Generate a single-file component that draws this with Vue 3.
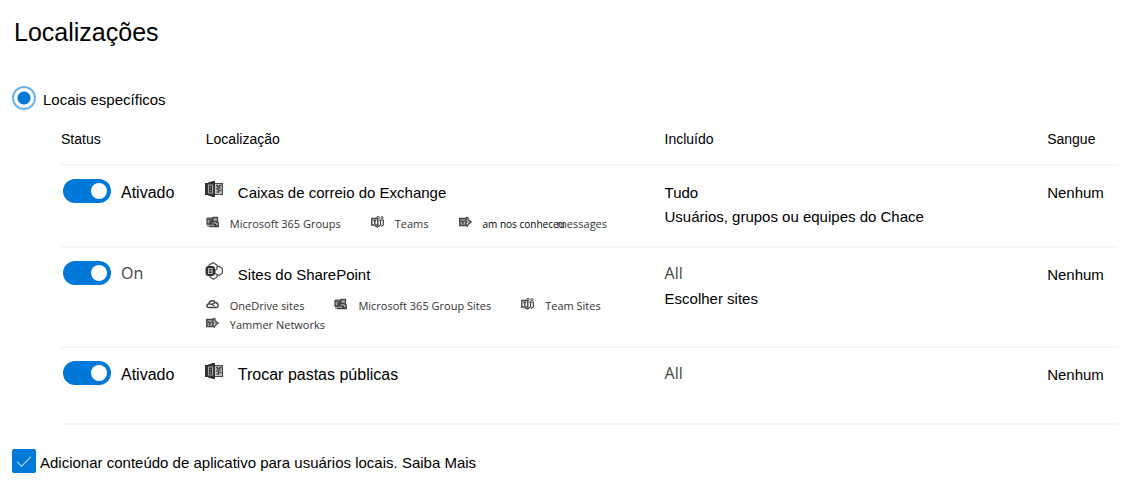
<script setup>
import { ref } from 'vue'

const specific = ref('specific')
const onPremises = ref(true)

const rows = ref([
  {
    id: 'exchange', on: true, status: 'Ativado', icon: 'exchange', name: 'Caixas de correio do Exchange',
    apps: [
      { icon: 'groups', label: 'Microsoft 365 Groups' },
      { icon: 'teams', label: 'Teams' },
      { icon: 'yammer', local: 'am nos conheceu', label: 'messages' }
    ],
    included: ['Tudo', 'Usuários, grupos ou equipes do Chace'], excluded: 'Nenhum'
  },
  {
    id: 'sharepoint', on: true, status: 'On', icon: 'sharepoint', name: 'Sites do SharePoint',
    apps: [
      { icon: 'cloud', label: 'OneDrive sites' },
      { icon: 'groups', label: 'Microsoft 365 Group Sites' },
      { icon: 'teams', label: 'Team Sites' },
      { icon: 'yammer', label: 'Yammer Networks' }
    ],
    included: ['All', 'Escolher sites'], excluded: 'Nenhum'
  },
  {
    id: 'folders', on: true, status: 'Ativado', icon: 'exchange', name: 'Trocar pastas públicas',
    apps: [], included: ['All'], excluded: 'Nenhum'
  }
])

const isSource = (text) => text === 'On' || text === 'All'
</script>

<template>
  <main class="page">
    <h1 class="title">Localizações</h1>

    <label class="choice">
      <input v-model="specific" class="radio" type="radio" name="scope" value="specific" />
      <span>Locais específicos</span>
    </label>

    <table class="locations">
      <colgroup>
        <col class="col-status" />
        <col class="col-location" />
        <col class="col-included" />
        <col />
      </colgroup>
      <thead>
        <tr>
          <th scope="col">Status</th>
          <th scope="col">Localização</th>
          <th scope="col">Incluído</th>
          <th scope="col">Sangue</th>
        </tr>
      </thead>
      <tbody>
        <tr v-for="row in rows" :key="row.id">
          <td>
            <label class="status">
              <input v-model="row.on" class="switch" type="checkbox" role="switch" />
              <span :class="{ source: isSource(row.status) }">{{ row.status }}</span>
            </label>
          </td>
          <td>
            <div class="name" :class="{ large: row.id === 'folders' }">
              <svg v-if="row.icon === 'exchange'" class="icon" viewBox="0 0 18 18" aria-hidden="true">
                <path d="M0 3h2l6-2h2v16H8l-6-2H0z" fill="#303030" />
                <path d="M3.500 5h4v8h-4zM5.500 7.300v1M5.500 10v1" stroke="#a8a8a8" stroke-width="1.200" fill="none" />
                <path d="M10 3.500h7.400v11H10" stroke="#4c4c4c" stroke-width="1.200" fill="#c8c8c8" />
                <path d="M11 5.500h1.500v1.500h2V5.500h2M11 9h2.500v1.500h3M11.500 12h2v1M15 7.500v1.500" stroke="#4c4c4c" stroke-width="1.300" fill="none" />
              </svg>
              <svg v-else class="icon" viewBox="0 0 18 18" aria-hidden="true">
                <g fill="none" stroke="#4a4a4a" stroke-width="1.200">
                  <path d="M4 5V3l4-2.300L12 3v4l-3 2M12 5l2-.8 3.300 2.300v4.800L14 13.500l-4-2V8M12 13v2l-3.500 2.300L5 15v-2" />
                </g>
                <rect x="0.500" y="4" width="9.500" height="10" rx="3" fill="#303030" />
                <path d="M3.500 6.500h3.500v5H3.500zM3.500 9H7" stroke="#bbb" stroke-width="1.100" fill="none" />
              </svg>
              <span>{{ row.name }}</span>
            </div>
            <ul v-if="row.apps.length" class="apps">
              <li v-for="app in row.apps" :key="app.label" class="app">
                <svg class="mini" viewBox="0 0 13 12" fill="none" stroke="#444" aria-hidden="true">
                  <g v-if="app.icon === 'groups'">
                    <path d="M1 1h11v10H1z" fill="#aaa" stroke="none" />
                    <path d="M1 3h5v5H1zM3 5h2v2H3M7 1.500h4.500v4H7zM3 10.500h9.300V7L9.500 5.500" stroke-width="1.300" />
                    <path d="M7.500 7.500l3 2.500" stroke="#222" stroke-width="1.500" />
                  </g>
                  <g v-else-if="app.icon === 'teams'">
                    <path d="M.8 2.500h6v6.500h-6zM2.300 4.500h3M3.800 4.500V8" stroke-width="1.400" />
                    <circle cx="7" cy="1.500" r="1.200" />
                    <circle cx="11" cy="1.700" r="1.100" />
                    <path d="M8 4h4.300v5L10 10.500M9.500 4v5L6.500 11 4 10" stroke-width="1.200" />
                  </g>
                  <g v-else-if="app.icon === 'yammer'">
                    <path d="M.8 2.500h6.200v7H.8z" fill="#aaa" stroke-width="1.500" />
                    <path d="M2 4.500l1.800 2 1.700-2M3.800 6.500v2M7 1.500l2 .3v2l3.300 2.200L9 8.500 8 11" stroke-width="1.300" />
                    <path d="M7 6h3.500" />
                  </g>
                  <g v-else>
                    <path d="M3 9.500C0 9.500.3 6 3 6c0-4 5.500-4 6-1.500C13 4.500 13 9.500 10 9.500z" stroke-width="1.400" />
                    <path d="M3 6c2-.7 3.500.5 5.500 2M5.500 6.800L9 4.500" stroke-width="1.200" />
                  </g>
                </svg>
                <span><span v-if="app.local" class="local">{{ app.local }}</span><span :class="{ lapped: app.local }">{{ app.label }}</span></span>
              </li>
            </ul>
          </td>
          <td>
            <div v-for="text in row.included" :key="text" class="line" :class="{ source: isSource(text) }">{{ text }}</div>
          </td>
          <td><div class="line">{{ row.excluded }}</div></td>
        </tr>
      </tbody>
    </table>

    <label class="choice consent">
      <input v-model="onPremises" class="check" type="checkbox" />
      <span>Adicionar conteúdo de aplicativo para usuários locais. Saiba Mais</span>
    </label>
  </main>
</template>

<style>
body {
  margin: 0;
  background: #fff;
}
</style>

<style scoped>
.page {
  padding: 16px 19px 16px 12px;
  color: #000;
  font: 15px/24px "Liberation Sans", Arial, sans-serif;
}

.title {
  margin: 0 0 36px 2px;
  font-size: 25px;
  line-height: 32px;
  font-weight: 400;
}

.choice {
  display: flex;
  align-items: center;
  gap: 7px;
}

.choice span {
  padding-top: 4px;
}

.radio,
.check,
.switch {
  appearance: none;
  flex: none;
  margin: 0;
  width: 24px;
  height: 24px;
}

.radio {
  border: 2px solid #6cb2ea;
  border-radius: 50%;
  background: radial-gradient(circle, #0078d7 6px, transparent 7px);
}

.check {
  border-radius: 2px;
}

.check:checked {
  background: #0078d7;
}

.check:checked::before {
  content: "";
  display: block;
  width: 13px;
  height: 6px;
  margin: 7px 5px;
  border-left: 1px solid #b5dcf8;
  border-bottom: 1px solid #b5dcf8;
  transform: rotate(-45deg);
}

.switch {
  width: 48px;
  border-radius: 12px;
  background: #777;
}

.switch::before {
  content: "";
  display: block;
  width: 16px;
  height: 16px;
  margin: 4px;
  border-radius: 50%;
  background: #fff;
}

.switch:checked {
  background: #0078d7;
}

.switch:checked::before {
  margin-left: 28px;
}

.locations {
  width: calc(100% - 49px);
  margin: 10px 0 0 49px;
  table-layout: fixed;
  border-collapse: separate;
  border-spacing: 0;
}

.col-status {
  width: 13.7%;
}

.col-location {
  width: 43.4%;
}

.col-included {
  width: 36.2%;
}

th {
  padding: 5px 0 13px;
  border-bottom: 2px solid #f6f6f6;
  font-size: 14px;
  font-weight: 400;
  text-align: left;
}

td {
  height: 48px;
  padding: 15px 0 12px;
  border-bottom: 2px solid #f6f6f6;
  vertical-align: top;
  white-space: nowrap;
}

.status {
  display: flex;
  gap: 10px;
  margin: -2px 0 0 2px;
  font-size: 16px;
}

.status span {
  padding-top: 2px;
}

.source {
  color: #444;
  font-family: "Open Sans", "Noto Sans", sans-serif;
}

.status .source {
  padding-top: 0;
}

.line.source {
  padding-bottom: 4px;
  font-size: 16px;
  line-height: 20px;
}

.name {
  display: flex;
  gap: 15px;
  margin-left: -1px;
}

.large {
  font-size: 16px;
}

.icon {
  flex: none;
  width: 18px;
  height: 18px;
  margin-top: -1px;
}

.apps {
  display: flex;
  flex-wrap: wrap;
  column-gap: 30px;
  margin: 9px 0 0;
  padding: 0;
  list-style: none;
  color: #333;
  font: 11px/19px "Open Sans", "Noto Sans", sans-serif;
}

.app {
  display: flex;
  gap: 11px;
}

.mini {
  flex: none;
  width: 13px;
  height: 12px;
  margin-top: 2px;
}

.local {
  color: #000;
  font-size: 10px;
}

.lapped {
  margin-left: -8px;
}

.consent {
  gap: 4px;
  margin-top: 22px;
}
</style>
